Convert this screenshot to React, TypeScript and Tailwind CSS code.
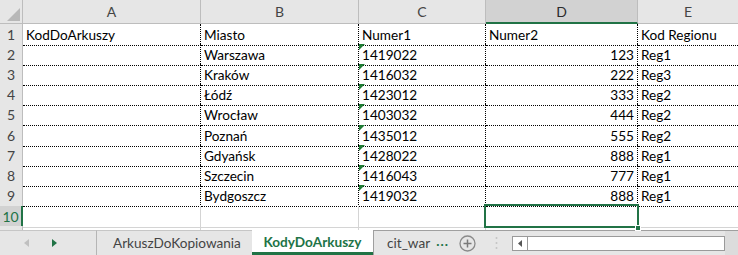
import React from "react";

const rows: { a: string; b: string; c: string; d: string; e: string }[] = [
  { a: "KodDoArkuszy", b: "Miasto", c: "Numer1", d: "Numer2", e: "Kod Regionu" },
  { a: "", b: "Warszawa", c: "1419022", d: "123", e: "Reg1" },
  { a: "", b: "Kraków", c: "1416032", d: "222", e: "Reg3" },
  { a: "", b: "Łódź", c: "1423012", d: "333", e: "Reg2" },
  { a: "", b: "Wrocław", c: "1403032", d: "444", e: "Reg2" },
  { a: "", b: "Poznań", c: "1435012", d: "555", e: "Reg2" },
  { a: "", b: "Gdyańsk", c: "1428022", d: "888", e: "Reg1" },
  { a: "", b: "Szczecin", c: "1416043", d: "777", e: "Reg1" },
  { a: "", b: "Bydgoszcz", c: "1419032", d: "888", e: "Reg1" },
];

const heights = ["h-[20px]", "h-[20px]", "h-[20px]", "h-[20px]", "h-[21px]", "h-[20px]", "h-[20px]", "h-[20px]", "h-[21px]", "h-[20px]"];

const font = { fontFamily: "Lato, 'Open Sans', sans-serif" };

function Tri() {
  return (
    <svg className="absolute left-0 top-0" width="6" height="6" viewBox="0 0 6 6">
      <polygon points="0,0 6,0 0,6" fill="#1e7b34" />
    </svg>
  );
}

const cell = "border-r border-b border-dotted border-black flex items-end pb-[2px] px-[3px] leading-none whitespace-nowrap overflow-hidden";

export default function App() {
  return (
    <div className="w-[738px] h-[255px] bg-white overflow-hidden flex flex-col text-[13.6px] text-black" style={font}>
      {/* header */}
      <div className="grid grid-cols-[23px_178px_158px_127px_152px_100px] h-[24px] shrink-0">
        <div className="relative bg-[#e6e6e6] border-r border-b border-[#bdbdbd]">
          <svg className="absolute right-[2px] bottom-[2px]" width="13" height="13" viewBox="0 0 13 13">
            <polygon points="13,0 13,13 0,13" fill="#b8b8b8" />
          </svg>
        </div>
        {["A", "B", "C"].map((l) => (
          <div key={l} className="bg-[#e6e6e6] border-r border-b border-[#bdbdbd] flex items-center justify-center text-[#444] text-[14px]">{l}</div>
        ))}
        <div className="bg-[#d2d2d2] border-r border-[#bdbdbd] border-b-2 border-b-[#217346] flex items-center justify-center text-[#2b2b2b] text-[14px] pt-[1px]">D</div>
        <div className="bg-[#e6e6e6] border-b border-[#bdbdbd] flex items-center justify-center text-[#444] text-[14px]">E</div>
      </div>
      {/* rows */}
      {rows.map((r, i) => (
        <div key={i} className={`grid grid-cols-[23px_178px_158px_127px_152px_100px] shrink-0 ${heights[i]}`}>
          <div className="bg-[#e6e6e6] border-r border-b border-[#bdbdbd] flex items-center justify-center text-[#444] text-[14px]">{i + 1}</div>
          <div className={cell}>{r.a}</div>
          <div className={cell}>{r.b}</div>
          <div className={`relative ${cell}`}>
            {i > 0 && <Tri />}
            {r.c}
          </div>
          <div className={`${cell} ${i > 0 ? "justify-end" : ""}`}>{r.d}</div>
          <div className="border-b border-dotted border-black flex items-end pb-[2px] px-[3px] leading-none whitespace-nowrap">{r.e}</div>
        </div>
      ))}
      {/* row 10 */}
      <div className={`grid grid-cols-[23px_178px_158px_127px_152px_100px] shrink-0 ${heights[9]}`}>
        <div className="bg-[#d2d2d2] border-r-2 border-r-[#217346] border-b border-[#bdbdbd] flex items-center justify-center text-[#217346] text-[14px]">10</div>
        <div className="border-r border-b border-[#d4d4d4]"></div>
        <div className="border-r border-b border-[#d4d4d4]"></div>
        <div className="border-r border-b border-[#d4d4d4]"></div>
        <div className="relative border-r border-b border-[#d4d4d4]">
          <div className="absolute left-[-2px] top-[-2px] right-[-2px] bottom-[-1px] border-2 border-[#217346]"></div>
          <div className="absolute right-[-4px] bottom-[-4px] w-[6px] h-[6px] bg-[#217346] border border-white"></div>
        </div>
        <div className="border-b border-[#d4d4d4]"></div>
      </div>
      <div className="grid grid-cols-[23px_178px_158px_127px_152px_100px] h-[4px] shrink-0">
        <div className="bg-[#e6e6e6] border-r border-[#bdbdbd]"></div>
        <div className="border-r border-[#d4d4d4]"></div>
        <div className="border-r border-[#d4d4d4]"></div>
        <div className="border-r border-[#d4d4d4]"></div>
        <div className="border-r border-[#d4d4d4]"></div>
        <div></div>
      </div>
      {/* tab bar */}
      <div className="flex h-[25px] shrink-0 bg-[#e6e6e6] text-[#444] text-[13.6px] overflow-hidden">
        <div className="w-[97px] shrink-0 flex items-center border-t border-[#c6c6c6] border-r border-r-[#b5b5b5]">
          <svg className="ml-[24px]" width="5" height="8" viewBox="0 0 5 8"><polygon points="5,0 5,8 0,4" fill="#c0c0c0" /></svg>
          <svg className="ml-[23px]" width="5" height="8" viewBox="0 0 5 8"><polygon points="0,0 0,8 5,4" fill="#217346" /></svg>
        </div>
        <div className="w-[155px] shrink-0 flex items-center pl-[16px] border-t border-[#c6c6c6] whitespace-nowrap">ArkuszDoKopiowania</div>
        <div className="w-[121px] shrink-0 flex items-center justify-center bg-white border-b-[3px] border-[#217346] font-bold text-[#217346] whitespace-nowrap pt-[2px]">KodyDoArkuszy</div>
        <div className="flex-1 flex items-center border-t border-[#9f9f9f]">
          <div className="w-[79px] h-full shrink-0 flex items-center border-l border-[#9f9f9f] whitespace-nowrap">
            <span className="ml-[13px]">cit_war</span>
            <span className="ml-[6px] text-[#217346] font-bold tracking-[1px] -mt-[4px]">...</span>
          </div>
          <svg className="ml-[7px] shrink-0" width="17" height="17" viewBox="0 0 17 17">
            <circle cx="8.5" cy="8.5" r="7.5" fill="none" stroke="#8a8a8a" strokeWidth="1.3" />
            <path d="M8.5 4.5v8M4.5 8.5h8" stroke="#7a7a7a" strokeWidth="1.5" />
          </svg>
          <svg className="ml-[19px] shrink-0" width="3" height="14" viewBox="0 0 3 14">
            <circle cx="1.5" cy="2" r="1" fill="#c4c4c4" />
            <circle cx="1.5" cy="7" r="1" fill="#c4c4c4" />
            <circle cx="1.5" cy="12" r="1" fill="#c4c4c4" />
          </svg>
          <div className="ml-[14px] w-[213px] shrink-0 h-[15px] bg-white border border-[#9a9a9a] flex">
            <div className="w-[15px] border-r border-[#9a9a9a] flex items-center justify-center">
              <svg width="4" height="7" viewBox="0 0 4 7"><polygon points="4,0 4,7 0,3.5" fill="#555" /></svg>
            </div>
          </div>
          <div className="flex-1 h-full bg-[#dcdcdc]"></div>
        </div>
      </div>
    </div>
  );
}
